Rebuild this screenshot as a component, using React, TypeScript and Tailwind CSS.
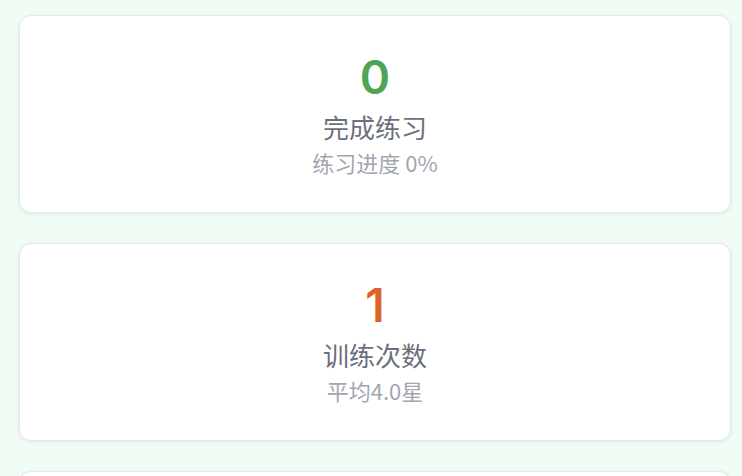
const stats = [
  { value: "0", label: "完成练习", sub: "练习进度 0%", color: "text-[#4fa556]" },
  { value: "1", label: "训练次数", sub: "平均4.0星", color: "text-[#dc622b]" },
  { value: "", label: "", sub: "", color: "" },
];

const StatCard = ({ value, label, sub, color }: (typeof stats)[number]) => {
  return (
    <div className="h-[198px] shrink-0 rounded-xl border border-[#e2e6ee] bg-white shadow-[0_1px_4px_rgba(148,163,184,0.18)] flex flex-col items-center pt-[36px]">
      <div className={`text-[46px] leading-[50px] font-semibold ${color}`} style={{ fontFamily: "Inter, sans-serif" }}>
        {value}
      </div>
      <div className="mt-[8px] text-[26px] leading-[34px] text-[#6c707c]">{label}</div>
      <div className="mt-[4px] text-[22px] leading-[28px] text-[#a2a6b0]">{sub}</div>
    </div>
  );
};

export default function App() {
  return (
    <div
      className="w-[742px] h-[476px] overflow-hidden bg-[#f1fcf4] pl-[19px] pr-[11px] pt-[15px] flex flex-col gap-[30px]"
      style={{ fontFamily: "'Noto Sans CJK SC', 'Noto Sans', sans-serif" }}
    >
      {stats.map((s, i) => (
        <StatCard key={i} {...s} />
      ))}
    </div>
  );
}
